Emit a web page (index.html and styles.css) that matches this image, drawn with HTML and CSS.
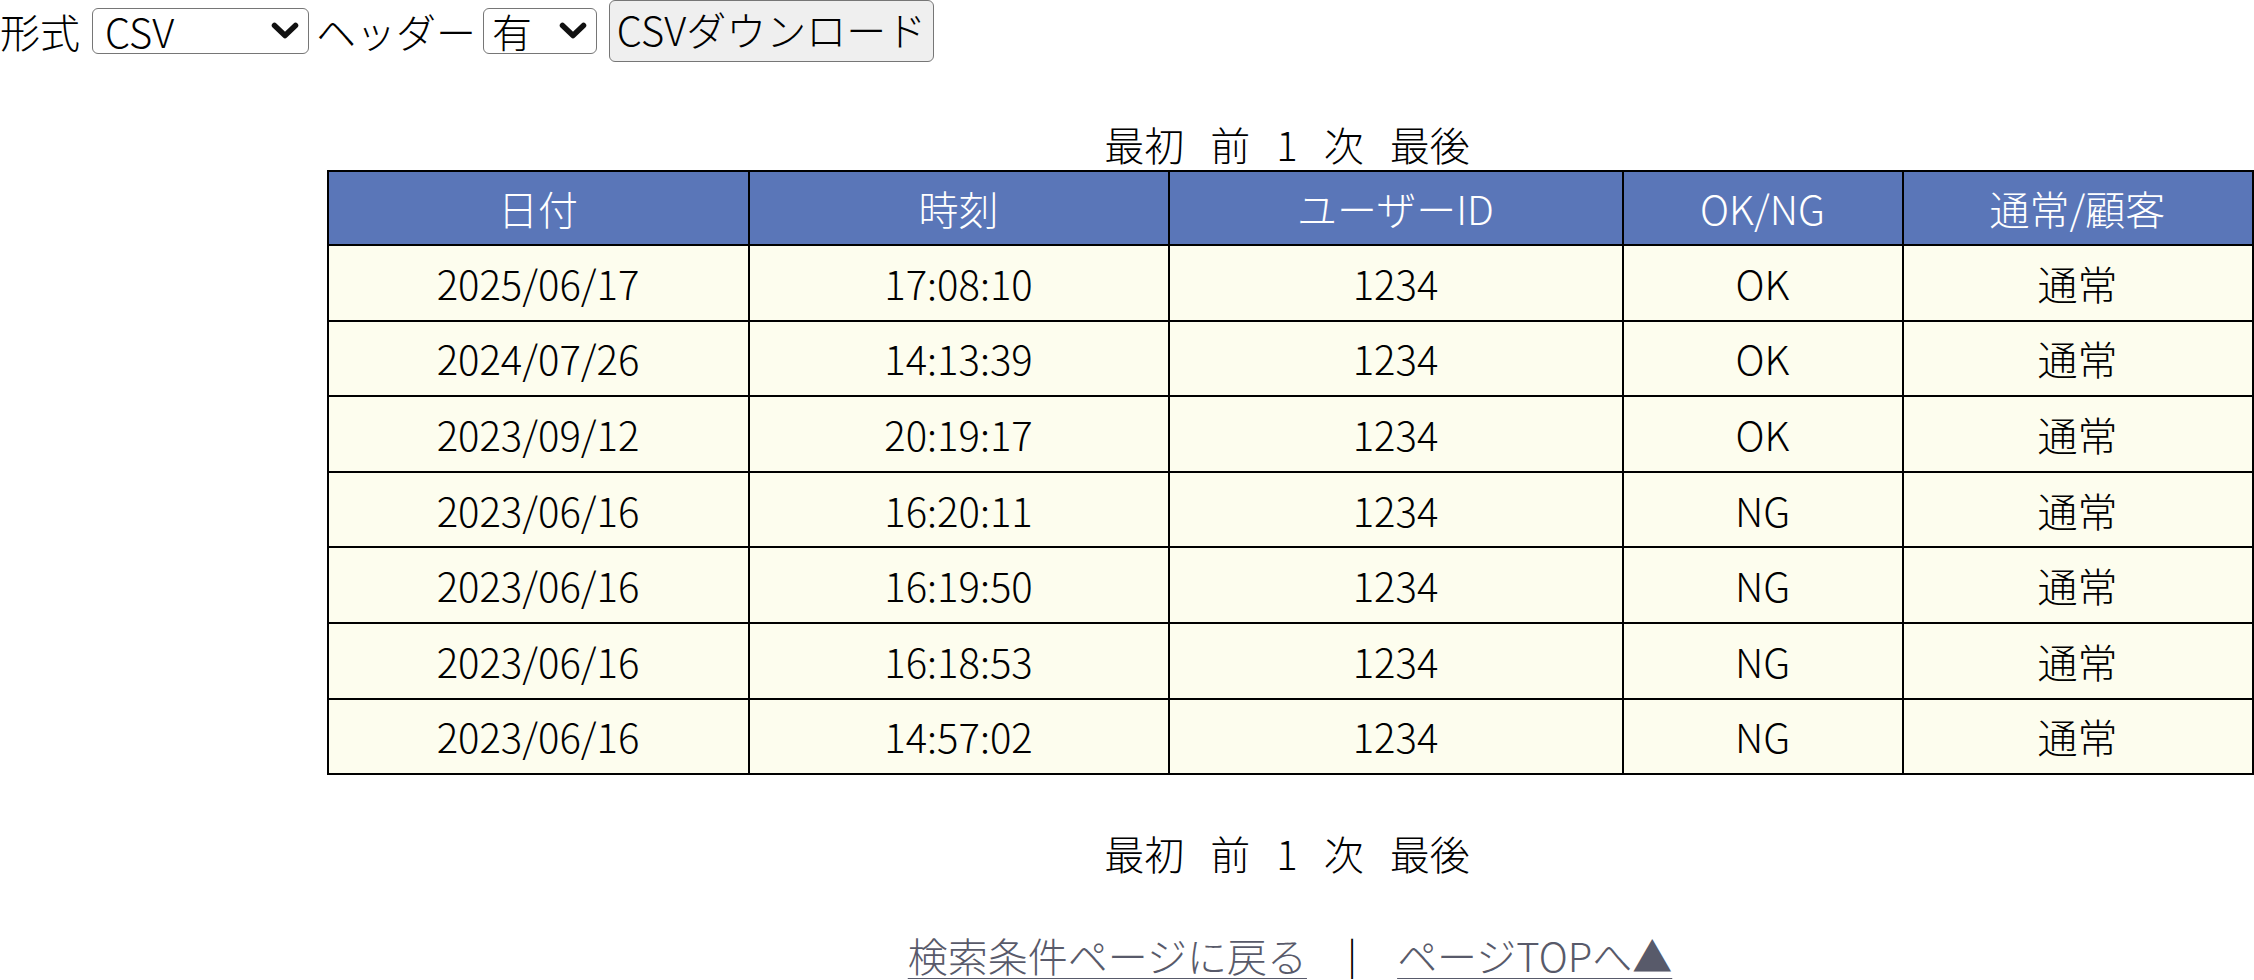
FILE: index.html
```html
<!DOCTYPE html>
<html lang="ja">
<head>
<meta charset="utf-8">
<title>履歴一覧</title>
<link rel="stylesheet" href="styles.css">
</head>
<body>
<div class="page">
  <form class="toolbar">
    <span class="label">形式</span>
    <span class="select-wrap fmt">
      <select class="select">
        <option>CSV</option>
        <option>TSV</option>
      </select>
      <svg class="chev" viewBox="0 0 28 18" aria-hidden="true"><path d="M3.5 3.5 L14 13.5 L24.5 3.5" fill="none" stroke="#111" stroke-width="5.5" stroke-linecap="round" stroke-linejoin="round"/></svg>
    </span>
    <span class="label hdr">ヘッダー</span>
    <span class="select-wrap has">
      <select class="select">
        <option>有</option>
        <option>無</option>
      </select>
      <svg class="chev" viewBox="0 0 28 18" aria-hidden="true"><path d="M3.5 3.5 L14 13.5 L24.5 3.5" fill="none" stroke="#111" stroke-width="5.5" stroke-linecap="round" stroke-linejoin="round"/></svg>
    </span>
    <button type="button" class="btn">CSVダウンロード</button>
  </form>

  <div class="pager pager-top">
    <span>最初</span><span>前</span><span>1</span><span>次</span><span>最後</span>
  </div>

  <table class="list">
    <colgroup>
      <col class="c1"><col class="c2"><col class="c3"><col class="c4"><col class="c5">
    </colgroup>
    <thead>
      <tr><th>日付</th><th>時刻</th><th>ユーザーID</th><th>OK/NG</th><th>通常/顧客</th></tr>
    </thead>
    <tbody>
      <tr><td>2025/06/17</td><td>17:08:10</td><td>1234</td><td>OK</td><td>通常</td></tr>
      <tr><td>2024/07/26</td><td>14:13:39</td><td>1234</td><td>OK</td><td>通常</td></tr>
      <tr><td>2023/09/12</td><td>20:19:17</td><td>1234</td><td>OK</td><td>通常</td></tr>
      <tr><td>2023/06/16</td><td>16:20:11</td><td>1234</td><td>NG</td><td>通常</td></tr>
      <tr><td>2023/06/16</td><td>16:19:50</td><td>1234</td><td>NG</td><td>通常</td></tr>
      <tr><td>2023/06/16</td><td>16:18:53</td><td>1234</td><td>NG</td><td>通常</td></tr>
      <tr><td>2023/06/16</td><td>14:57:02</td><td>1234</td><td>NG</td><td>通常</td></tr>
    </tbody>
  </table>

  <div class="pager pager-bottom">
    <span>最初</span><span>前</span><span>1</span><span>次</span><span>最後</span>
  </div>

  <div class="footer">
    <a href="#" class="link">検索条件ページに戻る</a>
    <span class="sep">|</span>
    <a href="#" class="link">ページTOPへ▲</a>
  </div>
</div>
</body>
</html>
```

FILE: styles.css
```css
html, body {
  margin: 0;
  padding: 0;
  background: #ffffff;
  overflow: hidden;
}

body {
  font-family: "Noto Sans CJK JP", "Noto Sans", sans-serif;
  font-size: 40px;
  font-weight: 300;
  color: #000;
}

.page {
  width: 2580px;
}

.toolbar {
  display: flex;
  align-items: center;
  height: 62px;
  margin: 0;
}

.label {
  line-height: 48px;
  margin-right: 12px;
}

.label.hdr {
  margin-right: 7px;
}

.select-wrap {
  position: relative;
  display: block;
  height: 46px;
  flex: none;
}

.select-wrap.fmt {
  width: 217px;
  margin-right: 7px;
}

.select-wrap.has {
  width: 114px;
  margin-right: 12px;
}

.select {
  appearance: none;
  -webkit-appearance: none;
  display: block;
  box-sizing: border-box;
  width: 100%;
  height: 46px;
  margin: 0;
  padding: 0 0 0 12px;
  border: 1px solid #767676;
  border-radius: 6px;
  background: #fff;
  font-family: inherit;
  font-size: 40px;
  font-weight: 300;
  line-height: 44px;
  color: #000;
}

.has .select {
  padding-left: 8px;
}

.chev {
  position: absolute;
  right: 10px;
  top: 14px;
  width: 28px;
  height: 18px;
  pointer-events: none;
}

.btn {
  box-sizing: border-box;
  width: 325px;
  height: 62px;
  margin: 0;
  padding: 0 6px 4px;
  border: 1px solid #767676;
  border-radius: 6px;
  background: #efefef;
  font-family: inherit;
  font-size: 40px;
  font-weight: 300;
  line-height: 56px;
  color: #000;
  white-space: nowrap;
  align-self: flex-start;
}

.pager {
  display: flex;
  justify-content: center;
  gap: 26px;
  line-height: 48px;
  height: 48px;
  padding-right: 6px;
}

.pager-top {
  margin-top: 58px;
  margin-bottom: 2px;
}

.pager-bottom {
  margin-top: 54px;
}

.list {
  width: 1925px;
  margin: 0 auto;
  border-collapse: collapse;
  table-layout: fixed;
  border: 2px solid #000;
}

.c1 { width: 421px; }
.c2 { width: 420px; }
.c3 { width: 454px; }
.c4 { width: 280px; }
.c5 { width: 350px; }

.list th,
.list td {
  border: 2px solid #000;
  padding: 0;
  text-align: center;
  vertical-align: middle;
  font-weight: 300;
  line-height: 48px;
}

.list th {
  background: #5a76b8;
  color: #fff;
  height: 72px;
}

.list td {
  background: #fdfdee;
  height: 73.6px;
}

.footer {
  display: flex;
  justify-content: center;
  align-items: center;
  margin-top: 54px;
  line-height: 48px;
  height: 48px;
}

.link {
  color: #585a6a;
  text-decoration: underline;
  text-decoration-thickness: 3px;
  text-underline-offset: 6px;
}

.sep {
  margin: 0 40px;
  color: #000;
}
```
